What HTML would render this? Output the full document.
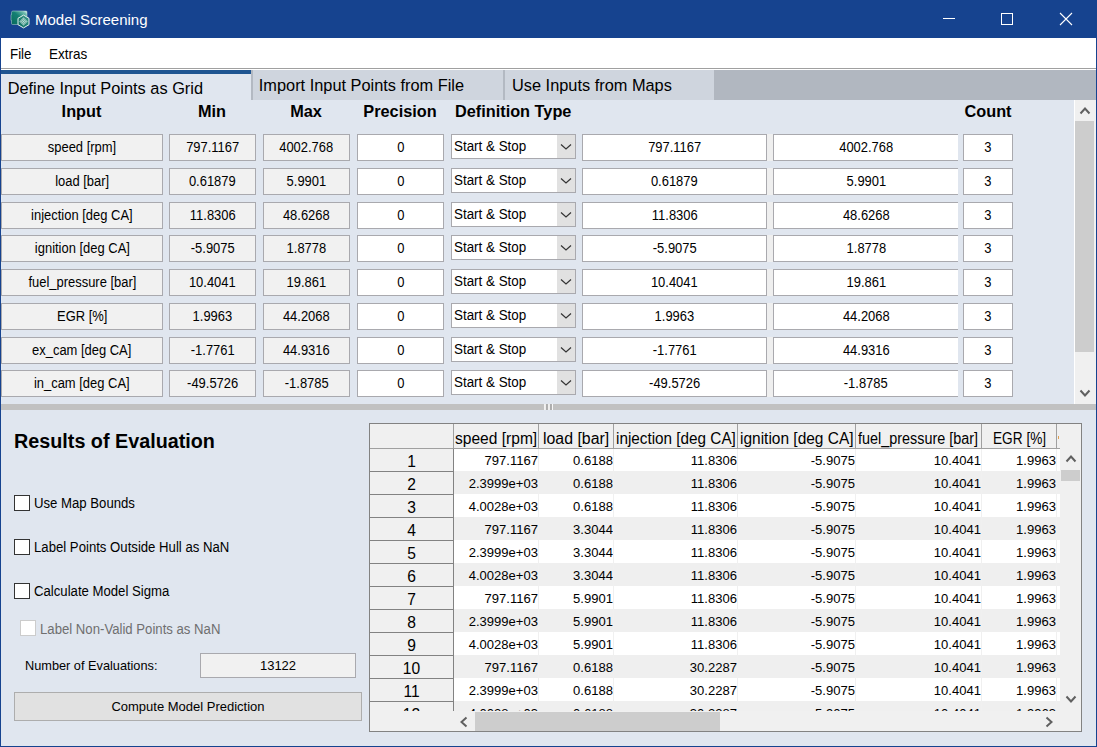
<!DOCTYPE html>
<html><head><meta charset="utf-8"><title>Model Screening</title>
<style>
html,body{margin:0;padding:0;}
body{width:1097px;height:747px;position:relative;overflow:hidden;background:#e0e6ef;font-family:"Liberation Sans", sans-serif;color:#000;}
div,span{box-sizing:border-box;}
.a{position:absolute;}
.t{position:absolute;white-space:nowrap;line-height:1;}
.box{position:absolute;border:1px solid #a9a9ae;height:27px;font-size:14px;text-align:center;line-height:25px;white-space:nowrap;overflow:hidden;}
.ro{background:#f1f1f1;}
.ed{background:#fff;}
.hd{position:absolute;font-weight:bold;font-size:16.3px;white-space:nowrap;line-height:1;}
.cb{position:absolute;width:16px;height:16px;border:1px solid #333;background:#fff;}
.box>span{display:inline-block;transform:scaleX(0.925);}
.lbl{position:absolute;font-size:13px;white-space:nowrap;line-height:1;}
</style></head><body>

<div class="a" style="left:0;top:0;width:1097px;height:38px;background:#16438f"></div>
<div class="a" style="left:0;top:0;width:1px;height:747px;background:#16438f"></div>
<div class="a" style="left:1096px;top:0;width:1px;height:747px;background:#16438f"></div>
<div class="a" style="left:0;top:746px;width:1097px;height:1px;background:#16438f"></div>
<svg class="a" style="left:10px;top:9px" width="22" height="22" viewBox="0 0 22 22">
<defs><linearGradient id="g1" x1="0" y1="1" x2="1" y2="0"><stop offset="0" stop-color="#086a5c"/><stop offset="0.55" stop-color="#148073"/><stop offset="0.85" stop-color="#6fbcaf"/><stop offset="1" stop-color="#f0faf7"/></linearGradient>
<linearGradient id="g2" x1="0" y1="1" x2="1" y2="0"><stop offset="0" stop-color="#0a6b5e"/><stop offset="1" stop-color="#3f9c8e"/></linearGradient></defs>
<path d="M3 2 h13 q1 0 1 1 v12.5 h-14.5 q-1 0 -1 -1 v-3 h-0.5 v-6 h0.5 v-2 q0 -1.5 1.5 -1.5z" fill="url(#g1)" stroke="#bcd9d4" stroke-width="0.5"/>
<path d="M13.5 6.1 L19 9.3 L19 15.7 L13.5 18.9 L8 15.7 L8 9.3Z" fill="url(#g2)" stroke="#e6f1ef" stroke-width="1"/>
<rect x="9.65" y="12.05" width="0.9" height="0.9" fill="#e9f5f2"/><rect x="10.50" y="11.20" width="0.9" height="0.9" fill="#e9f5f2"/><rect x="10.50" y="12.90" width="0.9" height="0.9" fill="#e9f5f2"/><rect x="11.35" y="10.35" width="0.9" height="0.9" fill="#e9f5f2"/><rect x="11.35" y="12.05" width="0.9" height="0.9" fill="#e9f5f2"/><rect x="11.35" y="13.75" width="0.9" height="0.9" fill="#e9f5f2"/><rect x="12.20" y="9.50" width="0.9" height="0.9" fill="#e9f5f2"/><rect x="12.20" y="11.20" width="0.9" height="0.9" fill="#e9f5f2"/><rect x="12.20" y="12.90" width="0.9" height="0.9" fill="#e9f5f2"/><rect x="12.20" y="14.60" width="0.9" height="0.9" fill="#e9f5f2"/><rect x="13.05" y="8.65" width="0.9" height="0.9" fill="#e9f5f2"/><rect x="13.05" y="10.35" width="0.9" height="0.9" fill="#e9f5f2"/><rect x="13.05" y="12.05" width="0.9" height="0.9" fill="#e9f5f2"/><rect x="13.05" y="13.75" width="0.9" height="0.9" fill="#e9f5f2"/><rect x="13.05" y="15.45" width="0.9" height="0.9" fill="#e9f5f2"/><rect x="13.90" y="9.50" width="0.9" height="0.9" fill="#e9f5f2"/><rect x="13.90" y="11.20" width="0.9" height="0.9" fill="#e9f5f2"/><rect x="13.90" y="12.90" width="0.9" height="0.9" fill="#e9f5f2"/><rect x="13.90" y="14.60" width="0.9" height="0.9" fill="#e9f5f2"/><rect x="14.75" y="10.35" width="0.9" height="0.9" fill="#e9f5f2"/><rect x="14.75" y="12.05" width="0.9" height="0.9" fill="#e9f5f2"/><rect x="14.75" y="13.75" width="0.9" height="0.9" fill="#e9f5f2"/><rect x="15.60" y="11.20" width="0.9" height="0.9" fill="#e9f5f2"/><rect x="15.60" y="12.90" width="0.9" height="0.9" fill="#e9f5f2"/><rect x="16.45" y="12.05" width="0.9" height="0.9" fill="#e9f5f2"/>
</svg>
<div class="t" style="left:35px;top:12px;font-size:15.3px;color:#fff;transform:scaleX(0.98);transform-origin:0 0">Model Screening</div>
<div class="a" style="left:943px;top:18px;width:12px;height:1px;background:#fff"></div>
<div class="a" style="left:1001px;top:13px;width:12px;height:12px;border:1px solid #fff"></div>
<svg class="a" style="left:1059px;top:12px" width="14" height="14" viewBox="0 0 14 14"><path d="M1 1 L13 13 M13 1 L1 13" stroke="#fff" stroke-width="1.1"/></svg>
<div class="a" style="left:1px;top:38px;width:1095px;height:30px;background:#fff"></div>
<div class="t" style="left:9.5px;top:45.5px;font-size:15px;transform:scaleX(0.89);transform-origin:0 0">File</div>
<div class="t" style="left:49px;top:45.5px;font-size:15px;transform:scaleX(0.90);transform-origin:0 0">Extras</div>
<div class="a" style="left:1px;top:68px;width:1095px;height:1px;background:#a0a0a0"></div>
<div class="a" style="left:1px;top:69px;width:1095px;height:1px;background:#fff"></div>
<div class="a" style="left:714px;top:70px;width:382px;height:30px;background:#b1b7c0"></div>
<div class="a" style="left:251px;top:70px;width:463px;height:30px;background:#cfd5de"></div>
<div class="a" style="left:251px;top:70px;width:2px;height:30px;background:#b3b9c2"></div>
<div class="a" style="left:503px;top:70px;width:2px;height:30px;background:#b3b9c2"></div>
<div class="a" style="left:1px;top:70px;width:250px;height:30px;background:#e0e6ef"></div>
<div class="a" style="left:1px;top:70px;width:250px;height:4px;background:#1f5591"></div>
<div class="t" style="left:7.7px;top:80px;font-size:16.35px">Define Input Points as Grid</div>
<div class="t" style="left:258.8px;top:77px;font-size:16.35px">Import Input Points from File</div>
<div class="t" style="left:512px;top:77px;font-size:16.35px">Use Inputs from Maps</div>
<div class="hd" style="left:-68.5px;width:300px;text-align:center;top:103px">Input</div>
<div class="hd" style="left:62px;width:300px;text-align:center;top:103px">Min</div>
<div class="hd" style="left:156px;width:300px;text-align:center;top:103px">Max</div>
<div class="hd" style="left:250px;width:300px;text-align:center;top:103px">Precision</div>
<div class="hd" style="left:838px;width:300px;text-align:center;top:103px">Count</div>
<div class="hd" style="left:455px;top:103px">Definition Type</div>
<div class="box ro" style="left:1px;top:134px;width:162px"><span>speed [rpm]</span></div>
<div class="box ro" style="left:169px;top:134px;width:87px"><span>797.1167</span></div>
<div class="box ro" style="left:263px;top:134px;width:87px"><span>4002.768</span></div>
<div class="box ed" style="left:357px;top:134px;width:87px"><span>0</span></div>
<div class="box ed" style="left:451px;top:134px;width:125px;height:25px;text-align:left;line-height:23px;padding-left:1.5px"><span style="transform:scaleX(0.957);transform-origin:0 50%">Start &amp; Stop</span></div>
<div class="a" style="left:557px;top:135px;width:18px;height:23px;background:#e1e1e1"></div>
<svg class="a" style="left:560px;top:143px" width="12" height="8" viewBox="0 0 12 8"><path d="M1 1.5 L6 6 L11 1.5" fill="none" stroke="#333" stroke-width="1.2"/></svg>
<div class="box ed" style="left:582px;top:134px;width:185px"><span>797.1167</span></div>
<div class="a" style="left:767px;top:134px;width:6px;height:27px;background:#efefef"></div>
<div class="box ed" style="left:773px;top:134px;width:185px;border-right:none"><span>4002.768</span></div>
<div class="box ed" style="left:963px;top:134px;width:50px"><span>3</span></div>
<div class="box ro" style="left:1px;top:168px;width:162px"><span>load [bar]</span></div>
<div class="box ro" style="left:169px;top:168px;width:87px"><span>0.61879</span></div>
<div class="box ro" style="left:263px;top:168px;width:87px"><span>5.9901</span></div>
<div class="box ed" style="left:357px;top:168px;width:87px"><span>0</span></div>
<div class="box ed" style="left:451px;top:168px;width:125px;height:25px;text-align:left;line-height:23px;padding-left:1.5px"><span style="transform:scaleX(0.957);transform-origin:0 50%">Start &amp; Stop</span></div>
<div class="a" style="left:557px;top:169px;width:18px;height:23px;background:#e1e1e1"></div>
<svg class="a" style="left:560px;top:177px" width="12" height="8" viewBox="0 0 12 8"><path d="M1 1.5 L6 6 L11 1.5" fill="none" stroke="#333" stroke-width="1.2"/></svg>
<div class="box ed" style="left:582px;top:168px;width:185px"><span>0.61879</span></div>
<div class="a" style="left:767px;top:168px;width:6px;height:27px;background:#efefef"></div>
<div class="box ed" style="left:773px;top:168px;width:185px;border-right:none"><span>5.9901</span></div>
<div class="box ed" style="left:963px;top:168px;width:50px"><span>3</span></div>
<div class="box ro" style="left:1px;top:202px;width:162px"><span>injection [deg CA]</span></div>
<div class="box ro" style="left:169px;top:202px;width:87px"><span>11.8306</span></div>
<div class="box ro" style="left:263px;top:202px;width:87px"><span>48.6268</span></div>
<div class="box ed" style="left:357px;top:202px;width:87px"><span>0</span></div>
<div class="box ed" style="left:451px;top:202px;width:125px;height:25px;text-align:left;line-height:23px;padding-left:1.5px"><span style="transform:scaleX(0.957);transform-origin:0 50%">Start &amp; Stop</span></div>
<div class="a" style="left:557px;top:203px;width:18px;height:23px;background:#e1e1e1"></div>
<svg class="a" style="left:560px;top:211px" width="12" height="8" viewBox="0 0 12 8"><path d="M1 1.5 L6 6 L11 1.5" fill="none" stroke="#333" stroke-width="1.2"/></svg>
<div class="box ed" style="left:582px;top:202px;width:185px"><span>11.8306</span></div>
<div class="a" style="left:767px;top:202px;width:6px;height:27px;background:#efefef"></div>
<div class="box ed" style="left:773px;top:202px;width:185px;border-right:none"><span>48.6268</span></div>
<div class="box ed" style="left:963px;top:202px;width:50px"><span>3</span></div>
<div class="box ro" style="left:1px;top:235px;width:162px"><span>ignition [deg CA]</span></div>
<div class="box ro" style="left:169px;top:235px;width:87px"><span>-5.9075</span></div>
<div class="box ro" style="left:263px;top:235px;width:87px"><span>1.8778</span></div>
<div class="box ed" style="left:357px;top:235px;width:87px"><span>0</span></div>
<div class="box ed" style="left:451px;top:235px;width:125px;height:25px;text-align:left;line-height:23px;padding-left:1.5px"><span style="transform:scaleX(0.957);transform-origin:0 50%">Start &amp; Stop</span></div>
<div class="a" style="left:557px;top:236px;width:18px;height:23px;background:#e1e1e1"></div>
<svg class="a" style="left:560px;top:244px" width="12" height="8" viewBox="0 0 12 8"><path d="M1 1.5 L6 6 L11 1.5" fill="none" stroke="#333" stroke-width="1.2"/></svg>
<div class="box ed" style="left:582px;top:235px;width:185px"><span>-5.9075</span></div>
<div class="a" style="left:767px;top:235px;width:6px;height:27px;background:#efefef"></div>
<div class="box ed" style="left:773px;top:235px;width:185px;border-right:none"><span>1.8778</span></div>
<div class="box ed" style="left:963px;top:235px;width:50px"><span>3</span></div>
<div class="box ro" style="left:1px;top:269px;width:162px"><span>fuel_pressure [bar]</span></div>
<div class="box ro" style="left:169px;top:269px;width:87px"><span>10.4041</span></div>
<div class="box ro" style="left:263px;top:269px;width:87px"><span>19.861</span></div>
<div class="box ed" style="left:357px;top:269px;width:87px"><span>0</span></div>
<div class="box ed" style="left:451px;top:269px;width:125px;height:25px;text-align:left;line-height:23px;padding-left:1.5px"><span style="transform:scaleX(0.957);transform-origin:0 50%">Start &amp; Stop</span></div>
<div class="a" style="left:557px;top:270px;width:18px;height:23px;background:#e1e1e1"></div>
<svg class="a" style="left:560px;top:278px" width="12" height="8" viewBox="0 0 12 8"><path d="M1 1.5 L6 6 L11 1.5" fill="none" stroke="#333" stroke-width="1.2"/></svg>
<div class="box ed" style="left:582px;top:269px;width:185px"><span>10.4041</span></div>
<div class="a" style="left:767px;top:269px;width:6px;height:27px;background:#efefef"></div>
<div class="box ed" style="left:773px;top:269px;width:185px;border-right:none"><span>19.861</span></div>
<div class="box ed" style="left:963px;top:269px;width:50px"><span>3</span></div>
<div class="box ro" style="left:1px;top:303px;width:162px"><span>EGR [%]</span></div>
<div class="box ro" style="left:169px;top:303px;width:87px"><span>1.9963</span></div>
<div class="box ro" style="left:263px;top:303px;width:87px"><span>44.2068</span></div>
<div class="box ed" style="left:357px;top:303px;width:87px"><span>0</span></div>
<div class="box ed" style="left:451px;top:303px;width:125px;height:25px;text-align:left;line-height:23px;padding-left:1.5px"><span style="transform:scaleX(0.957);transform-origin:0 50%">Start &amp; Stop</span></div>
<div class="a" style="left:557px;top:304px;width:18px;height:23px;background:#e1e1e1"></div>
<svg class="a" style="left:560px;top:312px" width="12" height="8" viewBox="0 0 12 8"><path d="M1 1.5 L6 6 L11 1.5" fill="none" stroke="#333" stroke-width="1.2"/></svg>
<div class="box ed" style="left:582px;top:303px;width:185px"><span>1.9963</span></div>
<div class="a" style="left:767px;top:303px;width:6px;height:27px;background:#efefef"></div>
<div class="box ed" style="left:773px;top:303px;width:185px;border-right:none"><span>44.2068</span></div>
<div class="box ed" style="left:963px;top:303px;width:50px"><span>3</span></div>
<div class="box ro" style="left:1px;top:337px;width:162px"><span>ex_cam [deg CA]</span></div>
<div class="box ro" style="left:169px;top:337px;width:87px"><span>-1.7761</span></div>
<div class="box ro" style="left:263px;top:337px;width:87px"><span>44.9316</span></div>
<div class="box ed" style="left:357px;top:337px;width:87px"><span>0</span></div>
<div class="box ed" style="left:451px;top:337px;width:125px;height:25px;text-align:left;line-height:23px;padding-left:1.5px"><span style="transform:scaleX(0.957);transform-origin:0 50%">Start &amp; Stop</span></div>
<div class="a" style="left:557px;top:338px;width:18px;height:23px;background:#e1e1e1"></div>
<svg class="a" style="left:560px;top:346px" width="12" height="8" viewBox="0 0 12 8"><path d="M1 1.5 L6 6 L11 1.5" fill="none" stroke="#333" stroke-width="1.2"/></svg>
<div class="box ed" style="left:582px;top:337px;width:185px"><span>-1.7761</span></div>
<div class="a" style="left:767px;top:337px;width:6px;height:27px;background:#efefef"></div>
<div class="box ed" style="left:773px;top:337px;width:185px;border-right:none"><span>44.9316</span></div>
<div class="box ed" style="left:963px;top:337px;width:50px"><span>3</span></div>
<div class="box ro" style="left:1px;top:370px;width:162px"><span>in_cam [deg CA]</span></div>
<div class="box ro" style="left:169px;top:370px;width:87px"><span>-49.5726</span></div>
<div class="box ro" style="left:263px;top:370px;width:87px"><span>-1.8785</span></div>
<div class="box ed" style="left:357px;top:370px;width:87px"><span>0</span></div>
<div class="box ed" style="left:451px;top:370px;width:125px;height:25px;text-align:left;line-height:23px;padding-left:1.5px"><span style="transform:scaleX(0.957);transform-origin:0 50%">Start &amp; Stop</span></div>
<div class="a" style="left:557px;top:371px;width:18px;height:23px;background:#e1e1e1"></div>
<svg class="a" style="left:560px;top:379px" width="12" height="8" viewBox="0 0 12 8"><path d="M1 1.5 L6 6 L11 1.5" fill="none" stroke="#333" stroke-width="1.2"/></svg>
<div class="box ed" style="left:582px;top:370px;width:185px"><span>-49.5726</span></div>
<div class="a" style="left:767px;top:370px;width:6px;height:27px;background:#efefef"></div>
<div class="box ed" style="left:773px;top:370px;width:185px;border-right:none"><span>-1.8785</span></div>
<div class="box ed" style="left:963px;top:370px;width:50px"><span>3</span></div>
<div class="a" style="left:1074px;top:100px;width:1px;height:304px;background:#fff"></div>
<div class="a" style="left:1075px;top:100px;width:21px;height:304px;background:#f0f0f0"></div>
<div class="a" style="left:1075px;top:121px;width:19px;height:231px;background:#cdcdcd"></div>
<svg class="a" style="left:1078.5px;top:106px" width="12" height="9" viewBox="0 0 12 9"><path d="M1.5 7.5 L6 2.5 L10.5 7.5" fill="none" stroke="#606060" stroke-width="2"/></svg>
<svg class="a" style="left:1078.5px;top:389px" width="12" height="9" viewBox="0 0 12 9"><path d="M1.5 1.5 L6 6.5 L10.5 1.5" fill="none" stroke="#606060" stroke-width="2"/></svg>
<div class="a" style="left:1px;top:404px;width:1095px;height:6px;background:#c1c1c1"></div>
<div class="a" style="left:544px;top:404px;width:1px;height:6px;background:#f2f2f2"></div>
<div class="a" style="left:545px;top:404px;width:1px;height:6px;background:#eeeeee"></div>
<div class="a" style="left:546px;top:404px;width:1px;height:6px;background:#adadad"></div>
<div class="a" style="left:547px;top:404px;width:1px;height:6px;background:#b0b0b0"></div>
<div class="a" style="left:548px;top:404px;width:1px;height:6px;background:#efefef"></div>
<div class="a" style="left:549px;top:404px;width:1px;height:6px;background:#ececec"></div>
<div class="a" style="left:550px;top:404px;width:1px;height:6px;background:#adadad"></div>
<div class="a" style="left:551px;top:404px;width:1px;height:6px;background:#b0b0b0"></div>
<div class="a" style="left:552px;top:404px;width:1px;height:6px;background:#f7f7f7"></div>
<div class="t" style="left:13.8px;top:431px;font-size:20.7px;font-weight:bold;transform:scaleX(0.955);transform-origin:0 0">Results of Evaluation</div>
<div class="cb" style="left:14px;top:495px"></div>
<div class="lbl" style="left:33.8px;top:496px;font-size:14px;transform:scaleX(0.94);transform-origin:0 0">Use Map Bounds</div>
<div class="cb" style="left:14px;top:539px"></div>
<div class="lbl" style="left:33.8px;top:540px;font-size:14px;transform:scaleX(0.94);transform-origin:0 0">Label Points Outside Hull as NaN</div>
<div class="cb" style="left:14px;top:583px"></div>
<div class="lbl" style="left:33.8px;top:584px;font-size:14px;transform:scaleX(0.94);transform-origin:0 0">Calculate Model Sigma</div>
<div class="cb" style="left:20px;top:620px;border-color:#cccccc;background:#fff"></div>
<div class="lbl" style="left:39.5px;top:621.5px;color:#6f6f6f;font-size:14px;transform:scaleX(0.94);transform-origin:0 0">Label Non-Valid Points as NaN</div>
<div class="lbl" style="left:25px;top:659px;transform:scaleX(0.98);transform-origin:0 0">Number of Evaluations:</div>
<div class="box ro" style="left:200px;top:653px;width:156px;height:25px;line-height:23px;font-size:13px">13122</div>
<div class="box" style="left:14px;top:692px;width:348px;height:29px;line-height:27px;background:#e1e1e1;border-color:#adadad;font-size:13px">Compute Model Prediction</div>
<div class="a" style="left:369px;top:423px;width:713px;height:309px;border:1px solid #828282;background:#f0f0f0"></div>
<div class="a" style="left:370px;top:424px;width:690px;height:287px;overflow:hidden">
<div class="a" style="left:84px;top:24px;width:606px;height:23px;background:#ffffff"></div>
<div class="t" style="left:84px;top:29.5px;width:84px;text-align:right;font-size:13.6px;transform:scaleX(0.96);transform-origin:100% 0">797.1167</div>
<div class="t" style="left:169px;top:29.5px;width:74px;text-align:right;font-size:13.6px;transform:scaleX(0.96);transform-origin:100% 0">0.6188</div>
<div class="t" style="left:244px;top:29.5px;width:123px;text-align:right;font-size:13.6px;transform:scaleX(0.96);transform-origin:100% 0">11.8306</div>
<div class="t" style="left:368px;top:29.5px;width:117px;text-align:right;font-size:13.6px;transform:scaleX(0.96);transform-origin:100% 0">-5.9075</div>
<div class="t" style="left:486px;top:29.5px;width:125px;text-align:right;font-size:13.6px;transform:scaleX(0.96);transform-origin:100% 0">10.4041</div>
<div class="t" style="left:612px;top:29.5px;width:74px;text-align:right;font-size:13.6px;transform:scaleX(0.96);transform-origin:100% 0">1.9963</div>
<div class="a" style="left:168px;top:24px;width:1px;height:23px;background:#f0f0f0"></div>
<div class="a" style="left:243px;top:24px;width:1px;height:23px;background:#f0f0f0"></div>
<div class="a" style="left:367px;top:24px;width:1px;height:23px;background:#f0f0f0"></div>
<div class="a" style="left:485px;top:24px;width:1px;height:23px;background:#f0f0f0"></div>
<div class="a" style="left:611px;top:24px;width:1px;height:23px;background:#f0f0f0"></div>
<div class="a" style="left:686px;top:24px;width:1px;height:23px;background:#f0f0f0"></div>
<div class="a" style="left:0;top:25px;width:83px;height:23px;background:#f0f0f0"></div>
<div class="t" style="left:0;top:30px;width:83px;text-align:center;font-size:15.6px">1</div>
<div class="a" style="left:0;top:47px;width:84px;height:1px;background:#828282"></div>
<div class="a" style="left:84px;top:47px;width:606px;height:23px;background:#efefef"></div>
<div class="t" style="left:84px;top:52.5px;width:84px;text-align:right;font-size:13.6px;transform:scaleX(0.96);transform-origin:100% 0">2.3999e+03</div>
<div class="t" style="left:169px;top:52.5px;width:74px;text-align:right;font-size:13.6px;transform:scaleX(0.96);transform-origin:100% 0">0.6188</div>
<div class="t" style="left:244px;top:52.5px;width:123px;text-align:right;font-size:13.6px;transform:scaleX(0.96);transform-origin:100% 0">11.8306</div>
<div class="t" style="left:368px;top:52.5px;width:117px;text-align:right;font-size:13.6px;transform:scaleX(0.96);transform-origin:100% 0">-5.9075</div>
<div class="t" style="left:486px;top:52.5px;width:125px;text-align:right;font-size:13.6px;transform:scaleX(0.96);transform-origin:100% 0">10.4041</div>
<div class="t" style="left:612px;top:52.5px;width:74px;text-align:right;font-size:13.6px;transform:scaleX(0.96);transform-origin:100% 0">1.9963</div>
<div class="a" style="left:168px;top:47px;width:1px;height:23px;background:#f0f0f0"></div>
<div class="a" style="left:243px;top:47px;width:1px;height:23px;background:#f0f0f0"></div>
<div class="a" style="left:367px;top:47px;width:1px;height:23px;background:#f0f0f0"></div>
<div class="a" style="left:485px;top:47px;width:1px;height:23px;background:#f0f0f0"></div>
<div class="a" style="left:611px;top:47px;width:1px;height:23px;background:#f0f0f0"></div>
<div class="a" style="left:686px;top:47px;width:1px;height:23px;background:#f0f0f0"></div>
<div class="a" style="left:0;top:48px;width:83px;height:23px;background:#f0f0f0"></div>
<div class="t" style="left:0;top:53px;width:83px;text-align:center;font-size:15.6px">2</div>
<div class="a" style="left:0;top:70px;width:84px;height:1px;background:#828282"></div>
<div class="a" style="left:84px;top:70px;width:606px;height:23px;background:#ffffff"></div>
<div class="t" style="left:84px;top:75.5px;width:84px;text-align:right;font-size:13.6px;transform:scaleX(0.96);transform-origin:100% 0">4.0028e+03</div>
<div class="t" style="left:169px;top:75.5px;width:74px;text-align:right;font-size:13.6px;transform:scaleX(0.96);transform-origin:100% 0">0.6188</div>
<div class="t" style="left:244px;top:75.5px;width:123px;text-align:right;font-size:13.6px;transform:scaleX(0.96);transform-origin:100% 0">11.8306</div>
<div class="t" style="left:368px;top:75.5px;width:117px;text-align:right;font-size:13.6px;transform:scaleX(0.96);transform-origin:100% 0">-5.9075</div>
<div class="t" style="left:486px;top:75.5px;width:125px;text-align:right;font-size:13.6px;transform:scaleX(0.96);transform-origin:100% 0">10.4041</div>
<div class="t" style="left:612px;top:75.5px;width:74px;text-align:right;font-size:13.6px;transform:scaleX(0.96);transform-origin:100% 0">1.9963</div>
<div class="a" style="left:168px;top:70px;width:1px;height:23px;background:#f0f0f0"></div>
<div class="a" style="left:243px;top:70px;width:1px;height:23px;background:#f0f0f0"></div>
<div class="a" style="left:367px;top:70px;width:1px;height:23px;background:#f0f0f0"></div>
<div class="a" style="left:485px;top:70px;width:1px;height:23px;background:#f0f0f0"></div>
<div class="a" style="left:611px;top:70px;width:1px;height:23px;background:#f0f0f0"></div>
<div class="a" style="left:686px;top:70px;width:1px;height:23px;background:#f0f0f0"></div>
<div class="a" style="left:0;top:71px;width:83px;height:23px;background:#f0f0f0"></div>
<div class="t" style="left:0;top:76px;width:83px;text-align:center;font-size:15.6px">3</div>
<div class="a" style="left:0;top:93px;width:84px;height:1px;background:#828282"></div>
<div class="a" style="left:84px;top:93px;width:606px;height:23px;background:#efefef"></div>
<div class="t" style="left:84px;top:98.5px;width:84px;text-align:right;font-size:13.6px;transform:scaleX(0.96);transform-origin:100% 0">797.1167</div>
<div class="t" style="left:169px;top:98.5px;width:74px;text-align:right;font-size:13.6px;transform:scaleX(0.96);transform-origin:100% 0">3.3044</div>
<div class="t" style="left:244px;top:98.5px;width:123px;text-align:right;font-size:13.6px;transform:scaleX(0.96);transform-origin:100% 0">11.8306</div>
<div class="t" style="left:368px;top:98.5px;width:117px;text-align:right;font-size:13.6px;transform:scaleX(0.96);transform-origin:100% 0">-5.9075</div>
<div class="t" style="left:486px;top:98.5px;width:125px;text-align:right;font-size:13.6px;transform:scaleX(0.96);transform-origin:100% 0">10.4041</div>
<div class="t" style="left:612px;top:98.5px;width:74px;text-align:right;font-size:13.6px;transform:scaleX(0.96);transform-origin:100% 0">1.9963</div>
<div class="a" style="left:168px;top:93px;width:1px;height:23px;background:#f0f0f0"></div>
<div class="a" style="left:243px;top:93px;width:1px;height:23px;background:#f0f0f0"></div>
<div class="a" style="left:367px;top:93px;width:1px;height:23px;background:#f0f0f0"></div>
<div class="a" style="left:485px;top:93px;width:1px;height:23px;background:#f0f0f0"></div>
<div class="a" style="left:611px;top:93px;width:1px;height:23px;background:#f0f0f0"></div>
<div class="a" style="left:686px;top:93px;width:1px;height:23px;background:#f0f0f0"></div>
<div class="a" style="left:0;top:94px;width:83px;height:23px;background:#f0f0f0"></div>
<div class="t" style="left:0;top:99px;width:83px;text-align:center;font-size:15.6px">4</div>
<div class="a" style="left:0;top:116px;width:84px;height:1px;background:#828282"></div>
<div class="a" style="left:84px;top:116px;width:606px;height:23px;background:#ffffff"></div>
<div class="t" style="left:84px;top:121.5px;width:84px;text-align:right;font-size:13.6px;transform:scaleX(0.96);transform-origin:100% 0">2.3999e+03</div>
<div class="t" style="left:169px;top:121.5px;width:74px;text-align:right;font-size:13.6px;transform:scaleX(0.96);transform-origin:100% 0">3.3044</div>
<div class="t" style="left:244px;top:121.5px;width:123px;text-align:right;font-size:13.6px;transform:scaleX(0.96);transform-origin:100% 0">11.8306</div>
<div class="t" style="left:368px;top:121.5px;width:117px;text-align:right;font-size:13.6px;transform:scaleX(0.96);transform-origin:100% 0">-5.9075</div>
<div class="t" style="left:486px;top:121.5px;width:125px;text-align:right;font-size:13.6px;transform:scaleX(0.96);transform-origin:100% 0">10.4041</div>
<div class="t" style="left:612px;top:121.5px;width:74px;text-align:right;font-size:13.6px;transform:scaleX(0.96);transform-origin:100% 0">1.9963</div>
<div class="a" style="left:168px;top:116px;width:1px;height:23px;background:#f0f0f0"></div>
<div class="a" style="left:243px;top:116px;width:1px;height:23px;background:#f0f0f0"></div>
<div class="a" style="left:367px;top:116px;width:1px;height:23px;background:#f0f0f0"></div>
<div class="a" style="left:485px;top:116px;width:1px;height:23px;background:#f0f0f0"></div>
<div class="a" style="left:611px;top:116px;width:1px;height:23px;background:#f0f0f0"></div>
<div class="a" style="left:686px;top:116px;width:1px;height:23px;background:#f0f0f0"></div>
<div class="a" style="left:0;top:117px;width:83px;height:23px;background:#f0f0f0"></div>
<div class="t" style="left:0;top:122px;width:83px;text-align:center;font-size:15.6px">5</div>
<div class="a" style="left:0;top:139px;width:84px;height:1px;background:#828282"></div>
<div class="a" style="left:84px;top:139px;width:606px;height:23px;background:#efefef"></div>
<div class="t" style="left:84px;top:144.5px;width:84px;text-align:right;font-size:13.6px;transform:scaleX(0.96);transform-origin:100% 0">4.0028e+03</div>
<div class="t" style="left:169px;top:144.5px;width:74px;text-align:right;font-size:13.6px;transform:scaleX(0.96);transform-origin:100% 0">3.3044</div>
<div class="t" style="left:244px;top:144.5px;width:123px;text-align:right;font-size:13.6px;transform:scaleX(0.96);transform-origin:100% 0">11.8306</div>
<div class="t" style="left:368px;top:144.5px;width:117px;text-align:right;font-size:13.6px;transform:scaleX(0.96);transform-origin:100% 0">-5.9075</div>
<div class="t" style="left:486px;top:144.5px;width:125px;text-align:right;font-size:13.6px;transform:scaleX(0.96);transform-origin:100% 0">10.4041</div>
<div class="t" style="left:612px;top:144.5px;width:74px;text-align:right;font-size:13.6px;transform:scaleX(0.96);transform-origin:100% 0">1.9963</div>
<div class="a" style="left:168px;top:139px;width:1px;height:23px;background:#f0f0f0"></div>
<div class="a" style="left:243px;top:139px;width:1px;height:23px;background:#f0f0f0"></div>
<div class="a" style="left:367px;top:139px;width:1px;height:23px;background:#f0f0f0"></div>
<div class="a" style="left:485px;top:139px;width:1px;height:23px;background:#f0f0f0"></div>
<div class="a" style="left:611px;top:139px;width:1px;height:23px;background:#f0f0f0"></div>
<div class="a" style="left:686px;top:139px;width:1px;height:23px;background:#f0f0f0"></div>
<div class="a" style="left:0;top:140px;width:83px;height:23px;background:#f0f0f0"></div>
<div class="t" style="left:0;top:145px;width:83px;text-align:center;font-size:15.6px">6</div>
<div class="a" style="left:0;top:162px;width:84px;height:1px;background:#828282"></div>
<div class="a" style="left:84px;top:162px;width:606px;height:23px;background:#ffffff"></div>
<div class="t" style="left:84px;top:167.5px;width:84px;text-align:right;font-size:13.6px;transform:scaleX(0.96);transform-origin:100% 0">797.1167</div>
<div class="t" style="left:169px;top:167.5px;width:74px;text-align:right;font-size:13.6px;transform:scaleX(0.96);transform-origin:100% 0">5.9901</div>
<div class="t" style="left:244px;top:167.5px;width:123px;text-align:right;font-size:13.6px;transform:scaleX(0.96);transform-origin:100% 0">11.8306</div>
<div class="t" style="left:368px;top:167.5px;width:117px;text-align:right;font-size:13.6px;transform:scaleX(0.96);transform-origin:100% 0">-5.9075</div>
<div class="t" style="left:486px;top:167.5px;width:125px;text-align:right;font-size:13.6px;transform:scaleX(0.96);transform-origin:100% 0">10.4041</div>
<div class="t" style="left:612px;top:167.5px;width:74px;text-align:right;font-size:13.6px;transform:scaleX(0.96);transform-origin:100% 0">1.9963</div>
<div class="a" style="left:168px;top:162px;width:1px;height:23px;background:#f0f0f0"></div>
<div class="a" style="left:243px;top:162px;width:1px;height:23px;background:#f0f0f0"></div>
<div class="a" style="left:367px;top:162px;width:1px;height:23px;background:#f0f0f0"></div>
<div class="a" style="left:485px;top:162px;width:1px;height:23px;background:#f0f0f0"></div>
<div class="a" style="left:611px;top:162px;width:1px;height:23px;background:#f0f0f0"></div>
<div class="a" style="left:686px;top:162px;width:1px;height:23px;background:#f0f0f0"></div>
<div class="a" style="left:0;top:163px;width:83px;height:23px;background:#f0f0f0"></div>
<div class="t" style="left:0;top:168px;width:83px;text-align:center;font-size:15.6px">7</div>
<div class="a" style="left:0;top:185px;width:84px;height:1px;background:#828282"></div>
<div class="a" style="left:84px;top:185px;width:606px;height:23px;background:#efefef"></div>
<div class="t" style="left:84px;top:190.5px;width:84px;text-align:right;font-size:13.6px;transform:scaleX(0.96);transform-origin:100% 0">2.3999e+03</div>
<div class="t" style="left:169px;top:190.5px;width:74px;text-align:right;font-size:13.6px;transform:scaleX(0.96);transform-origin:100% 0">5.9901</div>
<div class="t" style="left:244px;top:190.5px;width:123px;text-align:right;font-size:13.6px;transform:scaleX(0.96);transform-origin:100% 0">11.8306</div>
<div class="t" style="left:368px;top:190.5px;width:117px;text-align:right;font-size:13.6px;transform:scaleX(0.96);transform-origin:100% 0">-5.9075</div>
<div class="t" style="left:486px;top:190.5px;width:125px;text-align:right;font-size:13.6px;transform:scaleX(0.96);transform-origin:100% 0">10.4041</div>
<div class="t" style="left:612px;top:190.5px;width:74px;text-align:right;font-size:13.6px;transform:scaleX(0.96);transform-origin:100% 0">1.9963</div>
<div class="a" style="left:168px;top:185px;width:1px;height:23px;background:#f0f0f0"></div>
<div class="a" style="left:243px;top:185px;width:1px;height:23px;background:#f0f0f0"></div>
<div class="a" style="left:367px;top:185px;width:1px;height:23px;background:#f0f0f0"></div>
<div class="a" style="left:485px;top:185px;width:1px;height:23px;background:#f0f0f0"></div>
<div class="a" style="left:611px;top:185px;width:1px;height:23px;background:#f0f0f0"></div>
<div class="a" style="left:686px;top:185px;width:1px;height:23px;background:#f0f0f0"></div>
<div class="a" style="left:0;top:186px;width:83px;height:23px;background:#f0f0f0"></div>
<div class="t" style="left:0;top:191px;width:83px;text-align:center;font-size:15.6px">8</div>
<div class="a" style="left:0;top:208px;width:84px;height:1px;background:#828282"></div>
<div class="a" style="left:84px;top:208px;width:606px;height:23px;background:#ffffff"></div>
<div class="t" style="left:84px;top:213.5px;width:84px;text-align:right;font-size:13.6px;transform:scaleX(0.96);transform-origin:100% 0">4.0028e+03</div>
<div class="t" style="left:169px;top:213.5px;width:74px;text-align:right;font-size:13.6px;transform:scaleX(0.96);transform-origin:100% 0">5.9901</div>
<div class="t" style="left:244px;top:213.5px;width:123px;text-align:right;font-size:13.6px;transform:scaleX(0.96);transform-origin:100% 0">11.8306</div>
<div class="t" style="left:368px;top:213.5px;width:117px;text-align:right;font-size:13.6px;transform:scaleX(0.96);transform-origin:100% 0">-5.9075</div>
<div class="t" style="left:486px;top:213.5px;width:125px;text-align:right;font-size:13.6px;transform:scaleX(0.96);transform-origin:100% 0">10.4041</div>
<div class="t" style="left:612px;top:213.5px;width:74px;text-align:right;font-size:13.6px;transform:scaleX(0.96);transform-origin:100% 0">1.9963</div>
<div class="a" style="left:168px;top:208px;width:1px;height:23px;background:#f0f0f0"></div>
<div class="a" style="left:243px;top:208px;width:1px;height:23px;background:#f0f0f0"></div>
<div class="a" style="left:367px;top:208px;width:1px;height:23px;background:#f0f0f0"></div>
<div class="a" style="left:485px;top:208px;width:1px;height:23px;background:#f0f0f0"></div>
<div class="a" style="left:611px;top:208px;width:1px;height:23px;background:#f0f0f0"></div>
<div class="a" style="left:686px;top:208px;width:1px;height:23px;background:#f0f0f0"></div>
<div class="a" style="left:0;top:209px;width:83px;height:23px;background:#f0f0f0"></div>
<div class="t" style="left:0;top:214px;width:83px;text-align:center;font-size:15.6px">9</div>
<div class="a" style="left:0;top:231px;width:84px;height:1px;background:#828282"></div>
<div class="a" style="left:84px;top:231px;width:606px;height:23px;background:#efefef"></div>
<div class="t" style="left:84px;top:236.5px;width:84px;text-align:right;font-size:13.6px;transform:scaleX(0.96);transform-origin:100% 0">797.1167</div>
<div class="t" style="left:169px;top:236.5px;width:74px;text-align:right;font-size:13.6px;transform:scaleX(0.96);transform-origin:100% 0">0.6188</div>
<div class="t" style="left:244px;top:236.5px;width:123px;text-align:right;font-size:13.6px;transform:scaleX(0.96);transform-origin:100% 0">30.2287</div>
<div class="t" style="left:368px;top:236.5px;width:117px;text-align:right;font-size:13.6px;transform:scaleX(0.96);transform-origin:100% 0">-5.9075</div>
<div class="t" style="left:486px;top:236.5px;width:125px;text-align:right;font-size:13.6px;transform:scaleX(0.96);transform-origin:100% 0">10.4041</div>
<div class="t" style="left:612px;top:236.5px;width:74px;text-align:right;font-size:13.6px;transform:scaleX(0.96);transform-origin:100% 0">1.9963</div>
<div class="a" style="left:168px;top:231px;width:1px;height:23px;background:#f0f0f0"></div>
<div class="a" style="left:243px;top:231px;width:1px;height:23px;background:#f0f0f0"></div>
<div class="a" style="left:367px;top:231px;width:1px;height:23px;background:#f0f0f0"></div>
<div class="a" style="left:485px;top:231px;width:1px;height:23px;background:#f0f0f0"></div>
<div class="a" style="left:611px;top:231px;width:1px;height:23px;background:#f0f0f0"></div>
<div class="a" style="left:686px;top:231px;width:1px;height:23px;background:#f0f0f0"></div>
<div class="a" style="left:0;top:232px;width:83px;height:23px;background:#f0f0f0"></div>
<div class="t" style="left:0;top:237px;width:83px;text-align:center;font-size:15.6px">10</div>
<div class="a" style="left:0;top:254px;width:84px;height:1px;background:#828282"></div>
<div class="a" style="left:84px;top:254px;width:606px;height:23px;background:#ffffff"></div>
<div class="t" style="left:84px;top:259.5px;width:84px;text-align:right;font-size:13.6px;transform:scaleX(0.96);transform-origin:100% 0">2.3999e+03</div>
<div class="t" style="left:169px;top:259.5px;width:74px;text-align:right;font-size:13.6px;transform:scaleX(0.96);transform-origin:100% 0">0.6188</div>
<div class="t" style="left:244px;top:259.5px;width:123px;text-align:right;font-size:13.6px;transform:scaleX(0.96);transform-origin:100% 0">30.2287</div>
<div class="t" style="left:368px;top:259.5px;width:117px;text-align:right;font-size:13.6px;transform:scaleX(0.96);transform-origin:100% 0">-5.9075</div>
<div class="t" style="left:486px;top:259.5px;width:125px;text-align:right;font-size:13.6px;transform:scaleX(0.96);transform-origin:100% 0">10.4041</div>
<div class="t" style="left:612px;top:259.5px;width:74px;text-align:right;font-size:13.6px;transform:scaleX(0.96);transform-origin:100% 0">1.9963</div>
<div class="a" style="left:168px;top:254px;width:1px;height:23px;background:#f0f0f0"></div>
<div class="a" style="left:243px;top:254px;width:1px;height:23px;background:#f0f0f0"></div>
<div class="a" style="left:367px;top:254px;width:1px;height:23px;background:#f0f0f0"></div>
<div class="a" style="left:485px;top:254px;width:1px;height:23px;background:#f0f0f0"></div>
<div class="a" style="left:611px;top:254px;width:1px;height:23px;background:#f0f0f0"></div>
<div class="a" style="left:686px;top:254px;width:1px;height:23px;background:#f0f0f0"></div>
<div class="a" style="left:0;top:255px;width:83px;height:23px;background:#f0f0f0"></div>
<div class="t" style="left:0;top:260px;width:83px;text-align:center;font-size:15.6px">11</div>
<div class="a" style="left:0;top:277px;width:84px;height:1px;background:#828282"></div>
<div class="a" style="left:84px;top:277px;width:606px;height:23px;background:#efefef"></div>
<div class="t" style="left:84px;top:282.5px;width:84px;text-align:right;font-size:13.6px;transform:scaleX(0.96);transform-origin:100% 0">4.0028e+03</div>
<div class="t" style="left:169px;top:282.5px;width:74px;text-align:right;font-size:13.6px;transform:scaleX(0.96);transform-origin:100% 0">0.6188</div>
<div class="t" style="left:244px;top:282.5px;width:123px;text-align:right;font-size:13.6px;transform:scaleX(0.96);transform-origin:100% 0">30.2287</div>
<div class="t" style="left:368px;top:282.5px;width:117px;text-align:right;font-size:13.6px;transform:scaleX(0.96);transform-origin:100% 0">-5.9075</div>
<div class="t" style="left:486px;top:282.5px;width:125px;text-align:right;font-size:13.6px;transform:scaleX(0.96);transform-origin:100% 0">10.4041</div>
<div class="t" style="left:612px;top:282.5px;width:74px;text-align:right;font-size:13.6px;transform:scaleX(0.96);transform-origin:100% 0">1.9963</div>
<div class="a" style="left:168px;top:277px;width:1px;height:23px;background:#f0f0f0"></div>
<div class="a" style="left:243px;top:277px;width:1px;height:23px;background:#f0f0f0"></div>
<div class="a" style="left:367px;top:277px;width:1px;height:23px;background:#f0f0f0"></div>
<div class="a" style="left:485px;top:277px;width:1px;height:23px;background:#f0f0f0"></div>
<div class="a" style="left:611px;top:277px;width:1px;height:23px;background:#f0f0f0"></div>
<div class="a" style="left:686px;top:277px;width:1px;height:23px;background:#f0f0f0"></div>
<div class="a" style="left:0;top:278px;width:83px;height:23px;background:#f0f0f0"></div>
<div class="t" style="left:0;top:283px;width:83px;text-align:center;font-size:15.6px">12</div>
<div class="a" style="left:0;top:300px;width:84px;height:1px;background:#828282"></div>
<div class="a" style="left:83px;top:0;width:1px;height:287px;background:#828282"></div>
</div>
<div class="a" style="left:370px;top:424px;width:690px;height:24px;background:#f0f0f0"></div>
<div class="a" style="left:370px;top:448px;width:690px;height:1px;background:#a0a0a0"></div>
<div class="a" style="left:453px;top:424px;width:1px;height:24px;background:#a0a0a0"></div>
<div class="a" style="left:538px;top:424px;width:1px;height:24px;background:#a0a0a0"></div>
<div class="a" style="left:613px;top:424px;width:1px;height:24px;background:#a0a0a0"></div>
<div class="a" style="left:737px;top:424px;width:1px;height:24px;background:#a0a0a0"></div>
<div class="a" style="left:855px;top:424px;width:1px;height:24px;background:#a0a0a0"></div>
<div class="a" style="left:981px;top:424px;width:1px;height:24px;background:#a0a0a0"></div>
<div class="a" style="left:1056px;top:424px;width:1px;height:24px;background:#a0a0a0"></div>
<div class="t" style="left:454.91px;top:431px;font-size:15.8px;transform:scaleX(0.9852);transform-origin:0 0">speed [rpm]</div>
<div class="t" style="left:542.80px;top:431px;font-size:15.8px;transform:scaleX(1.0047);transform-origin:0 0">load [bar]</div>
<div class="t" style="left:615.83px;top:431px;font-size:15.8px;transform:scaleX(0.9680);transform-origin:0 0">injection [deg CA]</div>
<div class="t" style="left:740.02px;top:431px;font-size:15.8px;transform:scaleX(0.9798);transform-origin:0 0">ignition [deg CA]</div>
<div class="t" style="left:858.09px;top:431px;font-size:15.8px;transform:scaleX(0.9115);transform-origin:0 0">fuel_pressure [bar]</div>
<div class="t" style="left:993.14px;top:431px;font-size:15.8px;transform:scaleX(0.8644);transform-origin:0 0">EGR [%]</div>
<div class="a" style="left:1058px;top:436px;width:1px;height:3px;background:#e0a050"></div>
<div class="a" style="left:1060px;top:449px;width:21px;height:262px;background:#f0f0f0"></div>
<div class="a" style="left:1061px;top:470px;width:19px;height:11px;background:#cdcdcd"></div>
<svg class="a" style="left:1065px;top:454px" width="12" height="9" viewBox="0 0 12 9"><path d="M1.5 7.5 L6 2.5 L10.5 7.5" fill="none" stroke="#606060" stroke-width="2"/></svg>
<svg class="a" style="left:1065px;top:695px" width="12" height="9" viewBox="0 0 12 9"><path d="M1.5 1.5 L6 6.5 L10.5 1.5" fill="none" stroke="#606060" stroke-width="2"/></svg>
<div class="a" style="left:370px;top:711px;width:711px;height:20px;background:#f0f0f0"></div>
<div class="a" style="left:475px;top:712px;width:245px;height:19px;background:#cdcdcd"></div>
<svg class="a" style="left:459px;top:716px" width="9" height="12" viewBox="0 0 9 12"><path d="M7.5 1.5 L2.5 6 L7.5 10.5" fill="none" stroke="#606060" stroke-width="2"/></svg>
<svg class="a" style="left:1045px;top:716px" width="9" height="12" viewBox="0 0 9 12"><path d="M1.5 1.5 L6.5 6 L1.5 10.5" fill="none" stroke="#606060" stroke-width="2"/></svg>
</body></html>
